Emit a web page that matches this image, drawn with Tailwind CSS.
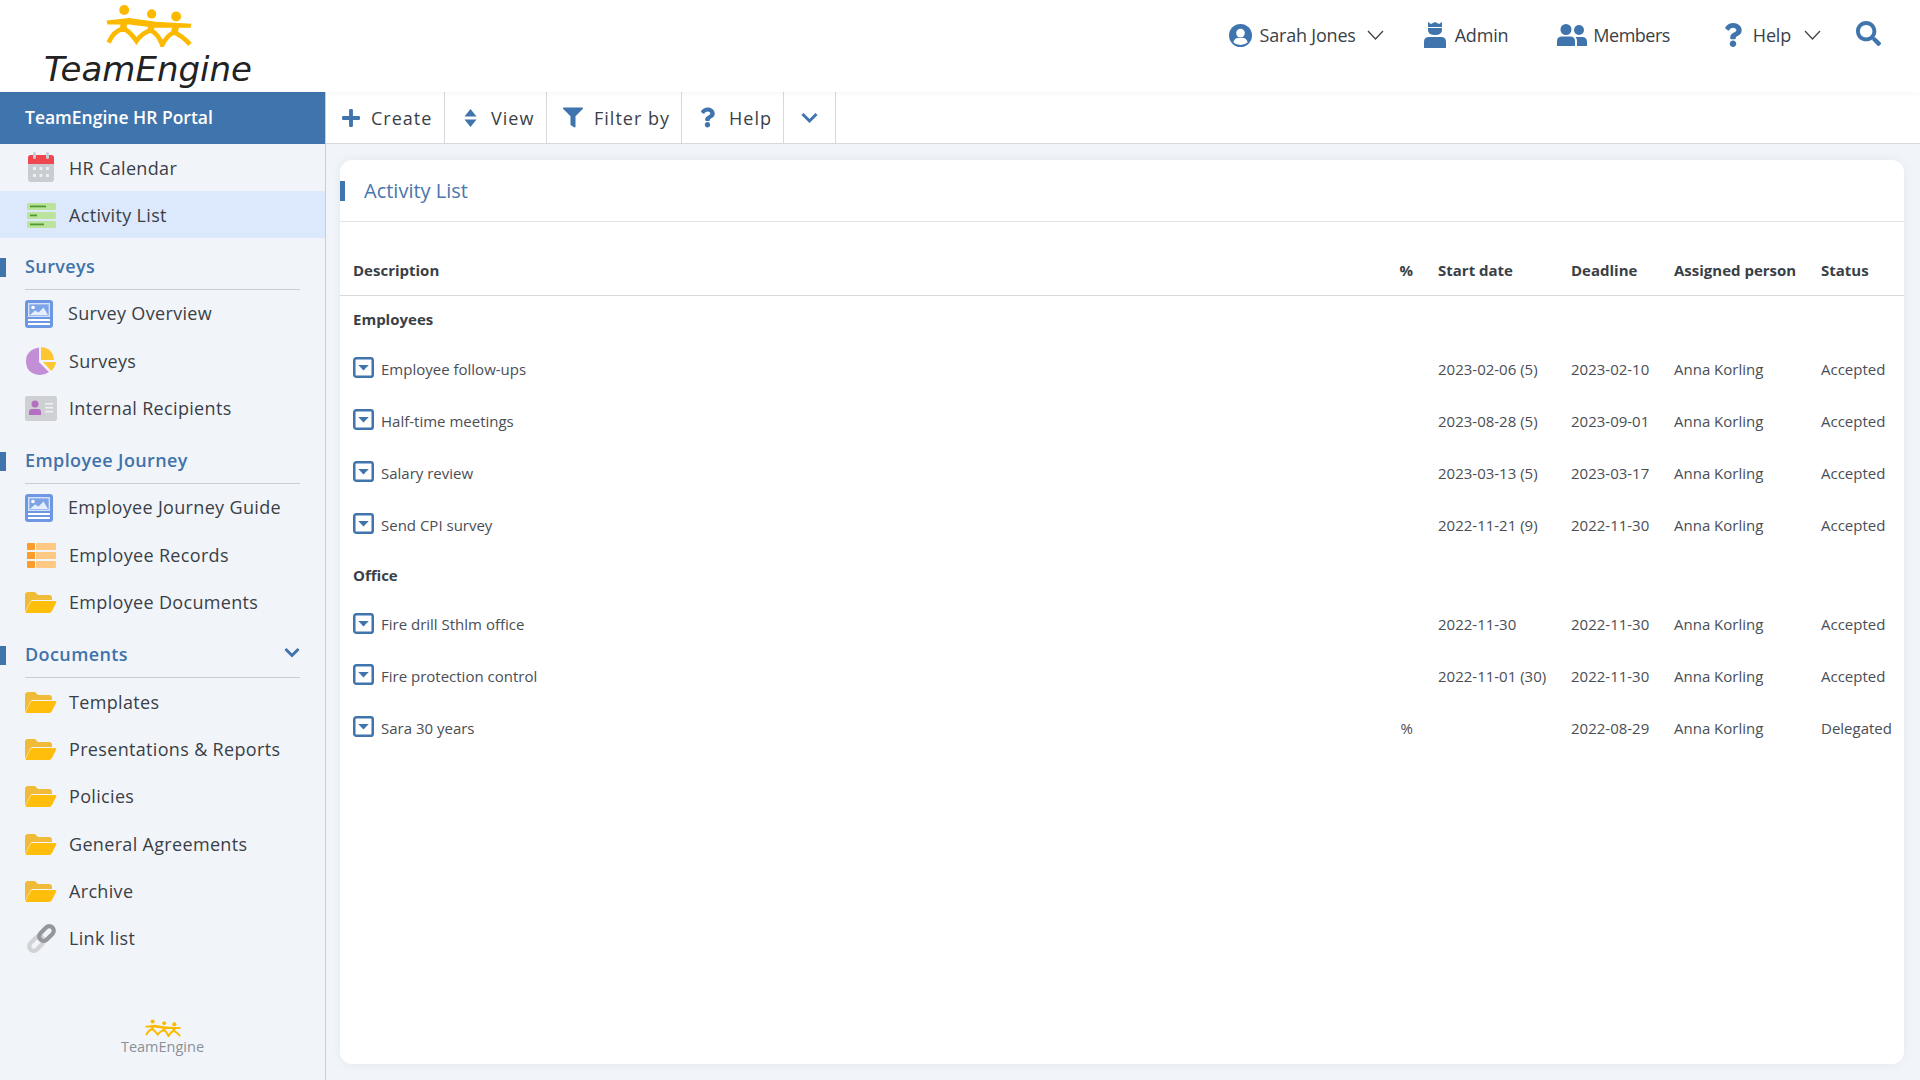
<!DOCTYPE html>
<html lang="en">
<head>
<meta charset="utf-8">
<title>TeamEngine HR Portal</title>
<script src="https://cdn.jsdelivr.net/npm/@tailwindcss/browser@4"></script>
</head>
<body class="w-[1920px] h-[1080px] overflow-hidden bg-[#f1f5f9] font-['Open_Sans',sans-serif] text-[#3a3f47]">
<svg width="0" height="0" class="absolute">
  <defs>
    <symbol id="logo" viewBox="225 10 270 130">
      <g fill="#fbb900"><circle cx="285" cy="28" r="15"/><circle cx="368" cy="40" r="14"/><circle cx="442" cy="48" r="15"/></g>
      <path d="M232 60L300 52L380 64L488 70L486 82L380 82L300 72L234 72Z" fill="#fbb900"/>
      <path d="M285 58L282 86M368 68L365 92M442 74L436 98" stroke="#fbb900" stroke-width="20" fill="none"/>
      <path d="M238 127Q252 92 282 84Q302 92 322 122Q340 96 365 90Q388 100 400 134Q415 104 436 96Q460 106 484 132" stroke="#fbb900" stroke-width="14" fill="none"/>
    </symbol>
    <symbol id="folder" viewBox="0 0 32 21">
      <path d="M0 3Q0 0 3 0H10L13 3H24Q27 3 27 6V8H8Q6 8 5 10L0 20Z" fill="#efbb38"/>
      <path d="M7 9H30Q32 9 31 11L27 19Q26 21 24 21H2Q0 21 1 19L5 11Q6 9 7 9Z" fill="#ffbe0b"/>
    </symbol>
    <symbol id="imgdoc" viewBox="0 0 28 28">
      <rect width="28" height="28" rx="3" fill="#6d97e2"/>
      <rect x="3.700" y="3.700" width="20.600" height="12.600" fill="#7ea4e8" stroke="#d5e2f8" stroke-width="1.400"/>
      <circle cx="8" cy="7.500" r="1.800" fill="#fff"/>
      <path d="M5 15L10 10.500L13.500 12.500L18.500 7.500L23 15Z" fill="#e6eefb"/>
      <rect x="3" y="19" width="22" height="2" fill="#fff"/><rect x="3" y="23" width="22" height="2" fill="#fff"/>
    </symbol>
    <symbol id="q" viewBox="0 0 384 512">
      <path fill="#3f74ad" d="M202.021 0C122.202 0 70.503 32.703 29.914 91.026c-7.363 10.58-5.093 25.086 5.178 32.874l43.138 32.709c10.373 7.865 25.132 6.026 33.253-4.148 25.049-31.381 43.63-49.449 82.757-49.449 30.764 0 68.816 19.799 68.816 49.631 0 22.552-18.617 34.134-48.993 51.164-35.423 19.86-82.299 44.576-82.299 106.405V320c0 13.255 10.745 24 24 24h72.471c13.255 0 24-10.745 24-24v-5.773c0-42.86 125.268-44.645 125.268-160.627C377.504 66.256 286.902 0 202.021 0zM192 373.459c-38.196 0-69.271 31.075-69.271 69.271 0 38.195 31.075 69.27 69.271 69.27s69.271-31.075 69.271-69.271-31.075-69.27-69.271-69.27z"/>
    </symbol>
    <symbol id="drop" viewBox="0 0 20 20">
      <rect x="1.200" y="1.200" width="17.600" height="17.600" rx="2" fill="#fff" stroke="#3f74ad" stroke-width="2.400"/>
      <path d="M5 7.500H15L10 12.800Z" fill="#3f74ad"/>
    </symbol>
  </defs>
</svg>

<header class="h-[92px] bg-white flex items-start justify-between shadow-[0_2px_6px_rgba(0,0,0,0.03)] relative z-10">
  <div class="w-[325px] h-[92px] flex flex-col items-center">
    <svg class="w-[90px] h-[43px] mt-[4px] ml-[-28px] shrink-0"><use href="#logo"/></svg>
    <span class="text-[34px] leading-[42px] italic font-light font-['DejaVu_Sans',sans-serif] text-[#222] mt-[1px] ml-[-29px]">TeamEngine</span>
  </div>
  <nav class="flex items-center h-[70px] text-[18px] text-[#3a3f47] pr-[39px]">
    <svg class="w-[23px] h-[23px]" viewBox="0 0 24 24"><circle cx="12" cy="12" r="12" fill="#3f74ad"/><circle cx="12" cy="9.500" r="4.500" fill="#fff"/><path d="M4.500 19Q6 14.500 9 14.500H15Q18 14.500 19.500 19Q16.500 22 12 22Q7.500 22 4.500 19Z" fill="#fff"/></svg>
    <span class="ml-[8px] tracking-[-0.2px]">Sarah Jones</span>
    <svg class="w-[17px] h-[10px] ml-[11px]" viewBox="0 0 17 10"><path d="M1 1L8.500 9L16 1" fill="none" stroke="#444" stroke-width="1.300"/></svg>
    <svg class="w-[22px] h-[26px] ml-[40px]" viewBox="0 0 22 26"><path d="M4 0L7 2L11 0L15 2L18 0V5H4Z" fill="#3f74ad"/><path d="M4 6H18V8Q18 13 11 13Q4 13 4 8Z" fill="#3f74ad"/><path d="M0 26V20Q0 15 5 15H17Q22 15 22 20V26Z" fill="#3f74ad"/></svg>
    <span class="ml-[9px] tracking-[-0.2px]">Admin</span>
    <svg class="w-[30px] h-[22px] ml-[49px]" viewBox="0 0 30 22"><circle cx="9" cy="5.500" r="5.500" fill="#3f74ad"/><circle cx="22" cy="6" r="5" fill="#3f74ad"/><path d="M0 22V17Q0 12.500 5 12.500H13Q18 12.500 18 17V22Z" fill="#3f74ad"/><path d="M20 22V17Q20 14.500 18.500 13H25Q30 13 30 18V22Z" fill="#3f74ad"/></svg>
    <span class="ml-[6px] tracking-[-0.5px]">Members</span>
    <svg class="w-[18px] h-[24px] ml-[54px]"><use href="#q"/></svg>
    <span class="ml-[11px] tracking-[-0.2px]">Help</span>
    <svg class="w-[17px] h-[10px] ml-[13px]" viewBox="0 0 17 10"><path d="M1 1L8.500 9L16 1" fill="none" stroke="#444" stroke-width="1.300"/></svg>
    <svg class="w-[25px] h-[25px] ml-[35px] mt-[-3px]" viewBox="0 0 512 512"><path fill="#3f74ad" d="M505 442.7L405.3 343c-4.500-4.500-10.600-7-17-7H372c27.600-35.300 44-79.700 44-128C416 93.100 322.900 0 208 0S0 93.100 0 208s93.100 208 208 208c48.300 0 92.700-16.400 128-44v16.300c0 6.400 2.500 12.500 7 17l99.700 99.700c9.400 9.400 24.600 9.400 33.900 0l28.300-28.300c9.400-9.400 9.400-24.600.1-34zM208 336c-70.700 0-128-57.200-128-128 0-70.700 57.200-128 128-128 70.700 0 128 57.200 128 128 0 70.700-57.200 128-128 128z"/></svg>
  </nav>
</header>

<div class="flex h-[988px]">
  <aside class="w-[326px] shrink-0 h-full bg-[#f1f5fa] border-r border-[#c9ced6] flex flex-col text-[18px] tracking-[0.33px]">
    <div class="h-[52px] shrink-0 bg-[#3f74ad] text-white font-semibold text-[17.500px] tracking-normal flex items-center pl-[25px] pb-[2px]">TeamEngine HR Portal</div>

    <a class="h-[47px] flex items-center pl-[28px] pt-[1px]">
      <svg class="w-[26px] h-[30px] mt-[-3px]" viewBox="0 0 26 30"><rect y="3" width="26" height="27" rx="3" fill="#c9ccd0"/><path d="M0 12V6Q0 3 3 3H23Q26 3 26 6V12Z" fill="#f0464f"/><rect x="5" y="0" width="3" height="7" rx="1.500" fill="#c9ccd0"/><rect x="18" y="0" width="3" height="7" rx="1.500" fill="#c9ccd0"/><g fill="#eceef0"><rect x="5" y="15" width="3" height="3"/><rect x="11.500" y="15" width="3" height="3"/><rect x="18" y="15" width="3" height="3"/><rect x="5" y="22" width="3" height="3"/><rect x="11.500" y="22" width="3" height="3"/><rect x="18" y="22" width="3" height="3"/></g></svg>
      <span class="ml-[15px]">HR Calendar</span>
    </a>
    <a class="h-[47px] flex items-center pl-[27px] pt-[1px] bg-[#dce8fb]">
      <svg class="w-[29px] h-[25px]" viewBox="0 0 29 25"><g fill="#bce39c"><rect width="29" height="7" rx="1.500"/><rect y="9" width="29" height="7" rx="1.500"/><rect y="18" width="29" height="7" rx="1.500"/></g><g fill="#4d9a2f"><rect x="3" y="2.500" width="16" height="1.800"/><rect x="3" y="11.500" width="7" height="1.800"/><rect x="3" y="20.500" width="14" height="1.800"/></g></svg>
      <span class="ml-[13px]">Activity List</span>
    </a>

    <div class="h-[52px] shrink-0 relative">
      <span class="absolute left-0 top-[20px] w-[6px] h-[19px] bg-[#3f74ad]"></span>
      <div class="ml-[25px] mr-[25px] h-full border-b border-[#c9ced6] flex items-center pt-[5px] font-semibold tracking-[0.4px] text-[#4173aa]">Surveys</div>
    </div>
    <a class="h-[47.400px] flex items-center pl-[25px]"><svg class="w-[28px] h-[28px]"><use href="#imgdoc"/></svg><span class="ml-[15px]">Survey Overview</span></a>
    <a class="h-[47.400px] flex items-center pl-[26px]">
      <svg class="w-[30px] h-[28px]" viewBox="0 0 30 28"><path d="M13 0.500V15L23 25Q19 28 14 28Q0 27 0 14Q0 3 13 0.500Z" fill="#c28ed6"/><path d="M15 0Q27 1 28 13H15Z" fill="#fcc733"/><path d="M17 15H30Q29.500 20 25 24Z" fill="#fcc733"/></svg>
      <span class="ml-[13px]">Surveys</span>
    </a>
    <a class="h-[47.400px] flex items-center pl-[25px]">
      <svg class="w-[32px] h-[25px]" viewBox="0 0 32 25"><rect width="32" height="25" rx="2" fill="#cfd0d4"/><circle cx="10" cy="8" r="3.500" fill="#b56fc2"/><path d="M4 19V16Q4 13 7 13H13Q16 13 16 16V19Z" fill="#b56fc2"/><g fill="#eff0f2"><rect x="20" y="7" width="8" height="1.500"/><rect x="20" y="11" width="8" height="1.500"/><rect x="20" y="15" width="8" height="1.500"/></g></svg>
      <span class="ml-[12px]">Internal Recipients</span>
    </a>

    <div class="h-[52px] shrink-0 relative">
      <span class="absolute left-0 top-[20px] w-[6px] h-[19px] bg-[#3f74ad]"></span>
      <div class="ml-[25px] mr-[25px] h-full border-b border-[#c9ced6] flex items-center pt-[5px] font-semibold tracking-[0.4px] text-[#4173aa]">Employee Journey</div>
    </div>
    <a class="h-[47.400px] flex items-center pl-[25px]"><svg class="w-[28px] h-[28px]"><use href="#imgdoc"/></svg><span class="ml-[15px]">Employee Journey Guide</span></a>
    <a class="h-[47.400px] flex items-center pl-[27px]">
      <svg class="w-[29px] h-[25px]" viewBox="0 0 29 25"><g fill="#fd9b2b"><rect width="8" height="7" rx="1"/><rect y="9" width="8" height="7"/><rect y="18" width="8" height="7" rx="1"/></g><g fill="#ffc883"><rect x="9" width="20" height="7" rx="1"/><rect x="9" y="9" width="20" height="7"/><rect x="9" y="18" width="20" height="7" rx="1"/></g></svg>
      <span class="ml-[13px]">Employee Records</span>
    </a>
    <a class="h-[47.400px] flex items-center pl-[25px]"><svg class="w-[32px] h-[21px]"><use href="#folder"/></svg><span class="ml-[12px]">Employee Documents</span></a>

    <div class="h-[52px] shrink-0 relative">
      <span class="absolute left-0 top-[20px] w-[6px] h-[19px] bg-[#3f74ad]"></span>
      <div class="ml-[25px] mr-[25px] h-full border-b border-[#c9ced6] flex items-center justify-between pt-[5px] font-semibold tracking-[0.4px] text-[#4173aa]">Documents
        <svg class="w-[16px] h-[11px] mt-[-3px]" viewBox="0 0 16 11"><path d="M1.500 2L8 8.500L14.500 2" fill="none" stroke="#3f74ad" stroke-width="3"/></svg>
      </div>
    </div>
    <a class="h-[47.400px] flex items-center pl-[25px]"><svg class="w-[32px] h-[21px]"><use href="#folder"/></svg><span class="ml-[12px]">Templates</span></a>
    <a class="h-[47.400px] flex items-center pl-[25px]"><svg class="w-[32px] h-[21px]"><use href="#folder"/></svg><span class="ml-[12px]">Presentations &amp; Reports</span></a>
    <a class="h-[47.400px] flex items-center pl-[25px]"><svg class="w-[32px] h-[21px]"><use href="#folder"/></svg><span class="ml-[12px]">Policies</span></a>
    <a class="h-[47.400px] flex items-center pl-[25px]"><svg class="w-[32px] h-[21px]"><use href="#folder"/></svg><span class="ml-[12px]">General Agreements</span></a>
    <a class="h-[47.400px] flex items-center pl-[25px]"><svg class="w-[32px] h-[21px]"><use href="#folder"/></svg><span class="ml-[12px]">Archive</span></a>
    <a class="h-[47.400px] flex items-center pl-[27px]">
      <svg class="w-[29px] h-[29px] overflow-visible" viewBox="0 0 29 29"><g transform="rotate(-45 14.500 14.500)" fill="none" stroke-width="4.200"><rect x="-1" y="10" width="17" height="9" rx="4.500" stroke="#d0d2d5"/><rect x="13" y="10" width="17" height="9" rx="4.500" stroke="#94989e"/></g></svg>
      <span class="ml-[13px]">Link list</span>
    </a>

    <div class="mt-auto pb-[23px] flex flex-col items-center tracking-normal">
      <svg class="w-[38px] h-[18px]"><use href="#logo"/></svg>
      <span class="text-[14.500px] leading-[20px] text-[#8b9097]">TeamEngine</span>
    </div>
  </aside>

  <main class="flex-1 flex flex-col min-w-0">
    <div class="h-[52px] shrink-0 bg-white border-b border-[#d5d8dc] flex items-stretch text-[18px] tracking-[1px]">
      <button class="w-[119px] border-r border-[#d5d8dc] flex items-center pl-[16px]">
        <svg class="w-[18px] h-[18px]" viewBox="0 0 448 448"><path fill="#3f74ad" d="M416 176H272V32c0-17.670-14.330-32-32-32h-32c-17.670 0-32 14.330-32 32v144H32c-17.670 0-32 14.330-32 32v32c0 17.670 14.330 32 32 32h144v144c0 17.670 14.330 32 32 32h32c17.670 0 32-14.330 32-32V272h144c17.670 0 32-14.330 32-32v-32c0-17.670-14.330-32-32-32z"/></svg>
        <span class="ml-[11px] mt-[1px]">Create</span>
      </button>
      <button class="w-[102px] border-r border-[#d5d8dc] flex items-center pl-[19px]">
        <svg class="w-[13px] h-[20px]" viewBox="0 0 13 20"><path d="M6.500 1L12.500 8.500H0.500Z M6.500 19L0.500 11.500H12.500Z" fill="#3f74ad"/></svg>
        <span class="ml-[14px] mt-[1px]">View</span>
      </button>
      <button class="w-[135px] border-r border-[#d5d8dc] flex items-center pl-[16px]">
        <svg class="w-[20px] h-[21px]" viewBox="0 0 512 512"><path fill="#3f74ad" d="M487.976 0H24.028C2.71 0-8.047 25.866 7.058 40.971L192 225.941V432c0 7.831 3.821 15.17 10.237 19.662l80 55.98C298.02 518.69 320 507.493 320 487.98V225.941l184.947-184.97C520.021 25.896 509.338 0 487.976 0z"/></svg>
        <span class="ml-[11px] mt-[1px]">Filter by</span>
      </button>
      <button class="w-[102px] border-r border-[#d5d8dc] flex items-center pl-[18px]">
        <svg class="w-[15px] h-[21px]"><use href="#q"/></svg>
        <span class="ml-[14px] mt-[1px]">Help</span>
      </button>
      <button class="w-[52px] border-r border-[#d5d8dc] flex items-center pl-[17px]">
        <svg class="w-[17px] h-[12px]" viewBox="0 0 17 12"><path d="M1.500 2L8.500 9L15.500 2" fill="none" stroke="#3f74ad" stroke-width="3"/></svg>
      </button>
    </div>

    <section class="ml-[14px] mr-[16px] mt-[16px] mb-[16px] flex-1 bg-white rounded-[12px] shadow-[0_0_8px_rgba(120,140,170,0.12)] flex flex-col text-[15px] text-[#4a4e55]">
      <div class="h-[62px] shrink-0 border-b border-[#e2e4e7] relative flex items-center pl-[24px] text-[20px] text-[#4a76ad]">
        <span class="absolute left-0 top-[21px] w-[5px] h-[20px] bg-[#3f74ad]"></span>
        Activity List
      </div>
      <div class="h-[74px] shrink-0 border-b border-[#d5d8dc] grid grid-cols-[1043px_17px_158px_103px_147px_1fr] items-end pl-[13px] pb-[14px] font-bold text-[#3a3f47]">
        <span>Description</span><span class="text-right">%</span><span class="pl-[25px]">Start date</span><span>Deadline</span><span>Assigned person</span><span>Status</span>
      </div>

      <div class="h-[47px] shrink-0 flex items-center pl-[13px] font-bold text-[#3a3f47]">Employees</div>
      <div class="h-[52px] shrink-0 grid grid-cols-[1043px_17px_158px_103px_147px_1fr] items-center pl-[13px]"><span class="flex items-center"><svg class="w-[21px] h-[21px] mt-[-3px]"><use href="#drop"/></svg><span class="ml-[7px]">Employee follow-ups</span></span><span></span><span class="pl-[25px]">2023-02-06 (5)</span><span>2023-02-10</span><span>Anna Korling</span><span>Accepted</span></div>
      <div class="h-[52px] shrink-0 grid grid-cols-[1043px_17px_158px_103px_147px_1fr] items-center pl-[13px]"><span class="flex items-center"><svg class="w-[21px] h-[21px] mt-[-3px]"><use href="#drop"/></svg><span class="ml-[7px]">Half-time meetings</span></span><span></span><span class="pl-[25px]">2023-08-28 (5)</span><span>2023-09-01</span><span>Anna Korling</span><span>Accepted</span></div>
      <div class="h-[52px] shrink-0 grid grid-cols-[1043px_17px_158px_103px_147px_1fr] items-center pl-[13px]"><span class="flex items-center"><svg class="w-[21px] h-[21px] mt-[-3px]"><use href="#drop"/></svg><span class="ml-[7px]">Salary review</span></span><span></span><span class="pl-[25px]">2023-03-13 (5)</span><span>2023-03-17</span><span>Anna Korling</span><span>Accepted</span></div>
      <div class="h-[52px] shrink-0 grid grid-cols-[1043px_17px_158px_103px_147px_1fr] items-center pl-[13px]"><span class="flex items-center"><svg class="w-[21px] h-[21px] mt-[-3px]"><use href="#drop"/></svg><span class="ml-[7px]">Send CPI survey</span></span><span></span><span class="pl-[25px]">2022-11-21 (9)</span><span>2022-11-30</span><span>Anna Korling</span><span>Accepted</span></div>

      <div class="h-[48px] shrink-0 flex items-center pl-[13px] font-bold text-[#3a3f47]">Office</div>
      <div class="h-[51px] shrink-0 grid grid-cols-[1043px_17px_158px_103px_147px_1fr] items-center pl-[13px]"><span class="flex items-center"><svg class="w-[21px] h-[21px] mt-[-3px]"><use href="#drop"/></svg><span class="ml-[7px]">Fire drill Sthlm office</span></span><span></span><span class="pl-[25px]">2022-11-30</span><span>2022-11-30</span><span>Anna Korling</span><span>Accepted</span></div>
      <div class="h-[52px] shrink-0 grid grid-cols-[1043px_17px_158px_103px_147px_1fr] items-center pl-[13px]"><span class="flex items-center"><svg class="w-[21px] h-[21px] mt-[-3px]"><use href="#drop"/></svg><span class="ml-[7px]">Fire protection control</span></span><span></span><span class="pl-[25px]">2022-11-01 (30)</span><span>2022-11-30</span><span>Anna Korling</span><span>Accepted</span></div>
      <div class="h-[52px] shrink-0 grid grid-cols-[1043px_17px_158px_103px_147px_1fr] items-center pl-[13px]"><span class="flex items-center"><svg class="w-[21px] h-[21px] mt-[-3px]"><use href="#drop"/></svg><span class="ml-[7px]">Sara 30 years</span></span><span class="text-right">%</span><span class="pl-[25px]"></span><span>2022-08-29</span><span>Anna Korling</span><span>Delegated</span></div>
    </section>
  </main>
</div>
</body>
</html>
